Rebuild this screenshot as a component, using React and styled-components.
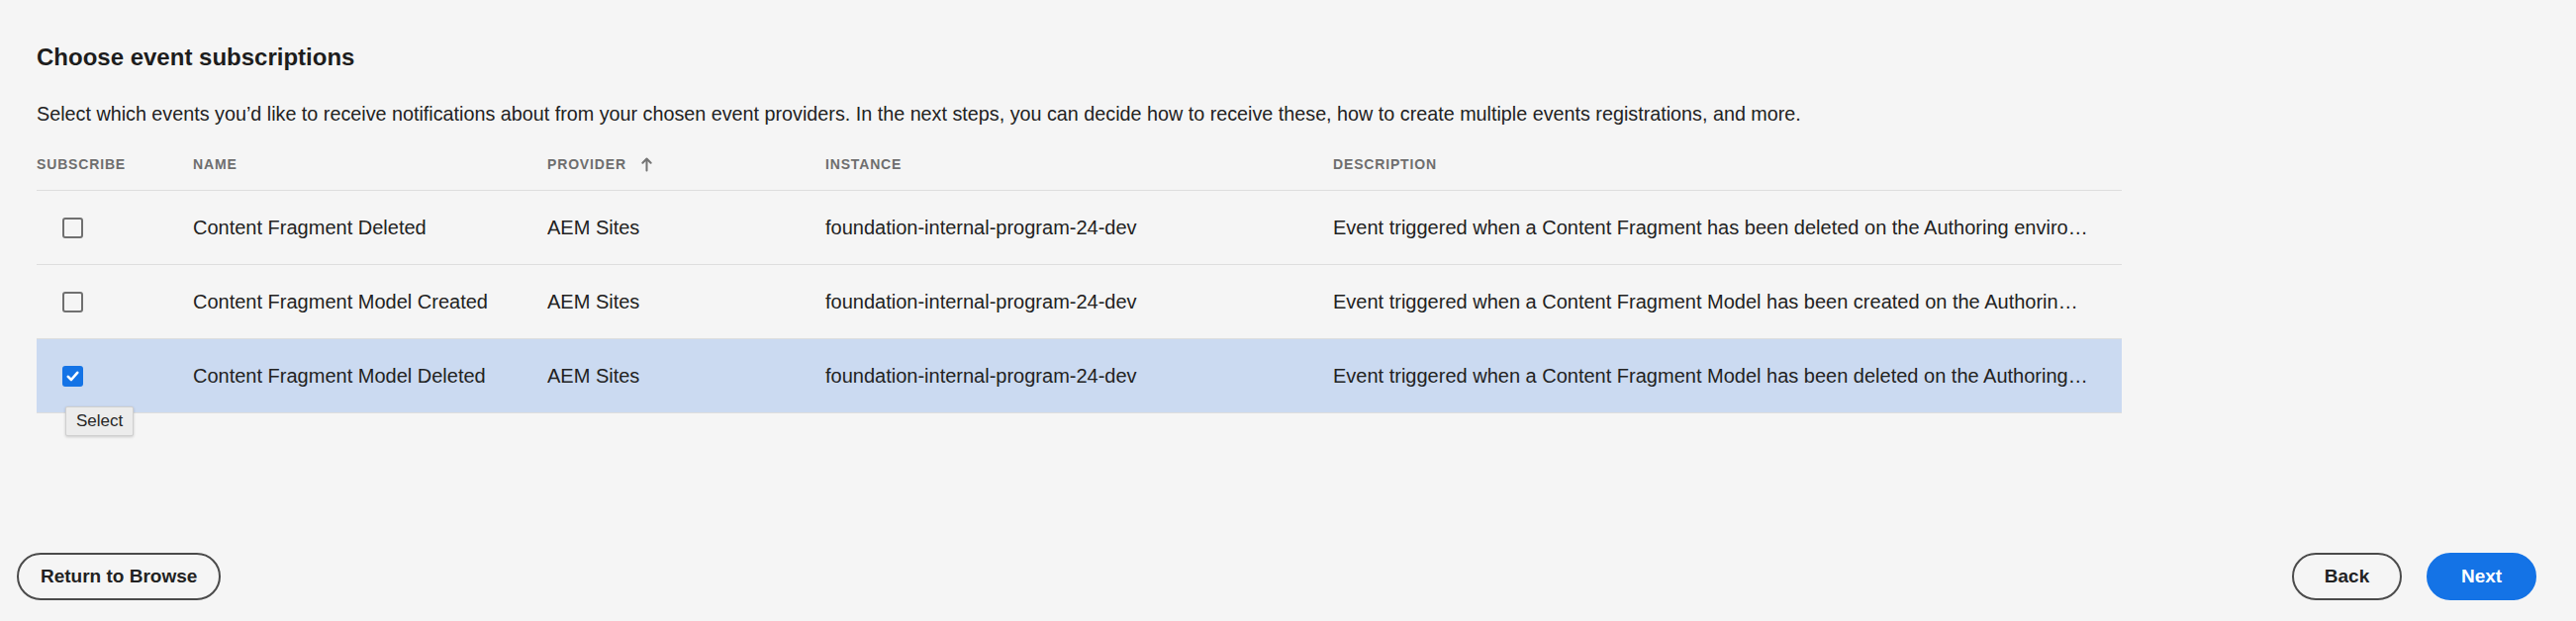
import React, { useState } from 'react';
import styled, { createGlobalStyle } from 'styled-components';

const GlobalStyle = createGlobalStyle`
  html, body {
    margin: 0;
    padding: 0;
    background: #f5f5f5;
  }
  body {
    font-family: "Liberation Sans", Arial, sans-serif;
    color: #222;
  }
`;

const events = [
  {
    id: 1,
    name: 'Content Fragment Deleted',
    provider: 'AEM Sites',
    instance: 'foundation-internal-program-24-dev',
    description:
      'Event triggered when a Content Fragment has been deleted on the Authoring environment of AEM Sites',
  },
  {
    id: 2,
    name: 'Content Fragment Model Created',
    provider: 'AEM Sites',
    instance: 'foundation-internal-program-24-dev',
    description:
      'Event triggered when a Content Fragment Model has been created on the Authoring environment of AEM Sites',
  },
  {
    id: 3,
    name: 'Content Fragment Model Deleted',
    provider: 'AEM Sites',
    instance: 'foundation-internal-program-24-dev',
    description:
      'Event triggered when a Content Fragment Model has been deleted on the Authoring environment of AEM Sites',
  },
];

const App = () => {
  const [selected, setSelected] = useState([3]);

  const toggle = (id) => {
    setSelected((prev) =>
      prev.includes(id) ? prev.filter((x) => x !== id) : [...prev, id]
    );
  };

  return (
    <Page>
      <GlobalStyle />
      <Main>
        <Title>Choose event subscriptions</Title>
        <Intro>
          Select which events you’d like to receive notifications about from your chosen event
          providers. In the next steps, you can decide how to receive these, how to create multiple
          events registrations, and more.
        </Intro>
        <Table>
          <HeaderRow>
            <HeadCell>Subscribe</HeadCell>
            <HeadCell>Name</HeadCell>
            <HeadCell>
              Provider
              <SortIcon viewBox="0 0 12 16">
                <path d="M6 1.5 L6 14.5 M1.5 6 L6 1.5 L10.5 6" fill="none" stroke="currentColor" strokeWidth="2.2" strokeLinecap="round" strokeLinejoin="round" />
              </SortIcon>
            </HeadCell>
            <HeadCell>Instance</HeadCell>
            <HeadCell>Description</HeadCell>
          </HeaderRow>
          {events.map((ev) => {
            const isOn = selected.includes(ev.id);
            return (
              <Row key={ev.id} $selected={isOn}>
                <CheckCell>
                  <Checkbox $checked={isOn} onClick={() => toggle(ev.id)}>
                    {isOn && (
                      <svg width="13" height="11" viewBox="0 0 13 11">
                        <path d="M1.8 5.8 L5 9 L11.2 1.8" fill="none" stroke="#fff" strokeWidth="2.6" strokeLinecap="round" strokeLinejoin="round" />
                      </svg>
                    )}
                  </Checkbox>
                  {ev.id === 3 && <Tooltip>Select</Tooltip>}
                </CheckCell>
                <Cell>{ev.name}</Cell>
                <Cell>{ev.provider}</Cell>
                <Cell>{ev.instance}</Cell>
                <Cell $truncate>{ev.description}</Cell>
              </Row>
            );
          })}
        </Table>
      </Main>
      <Footer>
        <Button>Return to Browse</Button>
        <ButtonGroup>
          <Button>Back</Button>
          <Button $primary>Next</Button>
        </ButtonGroup>
      </Footer>
    </Page>
  );
};

export default App;

const Page = styled.div`
  height: 100vh;
  box-sizing: border-box;
  display: flex;
  flex-direction: column;
  justify-content: space-between;
`;

const Main = styled.div`
  padding: 41px 0 0 37px;
  width: 2107px;
`;

const Title = styled.h2`
  margin: 0;
  font-size: 24px;
  line-height: 34px;
  font-weight: 700;
  color: #1d1d1d;
`;

const Intro = styled.p`
  margin: 26px 0 0;
  font-size: 19.75px;
  line-height: 28px;
  color: #222;
  white-space: nowrap;
`;

const Table = styled.div`
  margin-top: 11px;
  display: grid;
  grid-template-columns: 158px 358px 281px 513px 1fr;
`;

const HeaderRow = styled.div`
  display: contents;
`;

const HeadCell = styled.div`
  height: 52px;
  display: flex;
  align-items: center;
  border-bottom: 1px solid #dedede;
  font-size: 14px;
  font-weight: 700;
  letter-spacing: 0.06em;
  text-transform: uppercase;
  color: #6e6e6e;
`;

const SortIcon = styled.svg`
  width: 11px;
  height: 15px;
  margin-left: 15px;
  color: #747474;
`;

const Row = styled.div`
  display: contents;

  & > div {
    background: ${(p) => (p.$selected ? '#cbdaf1' : 'transparent')};
  }
`;

const Cell = styled.div`
  height: 74px;
  display: flex;
  align-items: center;
  border-bottom: 1px solid #dedede;
  font-size: 20px;
  color: #222;
  min-width: 0;
  padding-right: ${(p) => (p.$truncate ? '34px' : '0')};

  ${(p) =>
    p.$truncate &&
    `
    display: block;
    line-height: 74px;
    white-space: nowrap;
    overflow: hidden;
    text-overflow: ellipsis;
  `}
`;

const CheckCell = styled(Cell)`
  position: relative;
  padding-left: 26px;
`;

const Checkbox = styled.div`
  width: 21px;
  height: 21px;
  box-sizing: border-box;
  border-radius: 3px;
  display: flex;
  align-items: center;
  justify-content: center;
  cursor: pointer;
  border: ${(p) => (p.$checked ? 'none' : '2px solid #707070')};
  background: ${(p) => (p.$checked ? '#1473e6' : 'transparent')};
`;

const Tooltip = styled.div`
  position: absolute;
  left: 29px;
  top: 68px;
  z-index: 2;
  padding: 4px 10px;
  background: #ececec;
  border: 1px solid #cfcfcf;
  border-radius: 2px;
  box-shadow: 0 1px 3px rgba(0, 0, 0, 0.18);
  font-size: 17px;
  line-height: 20px;
  color: #262626;
`;

const Footer = styled.div`
  display: flex;
  justify-content: space-between;
  align-items: center;
  padding: 0 40px 21px 17px;
`;

const ButtonGroup = styled.div`
  display: flex;
  gap: 25px;
`;

const Button = styled.button`
  height: 48px;
  min-width: 111px;
  padding: 0 22px;
  box-sizing: border-box;
  border-radius: 24px;
  font-family: "Liberation Sans", Arial, sans-serif;
  font-size: 19px;
  font-weight: 700;
  cursor: pointer;
  border: ${(p) => (p.$primary ? '2px solid #1473e6' : '2px solid #4b4b4b')};
  background: ${(p) => (p.$primary ? '#1473e6' : 'transparent')};
  color: ${(p) => (p.$primary ? '#fff' : '#222')};
`;
